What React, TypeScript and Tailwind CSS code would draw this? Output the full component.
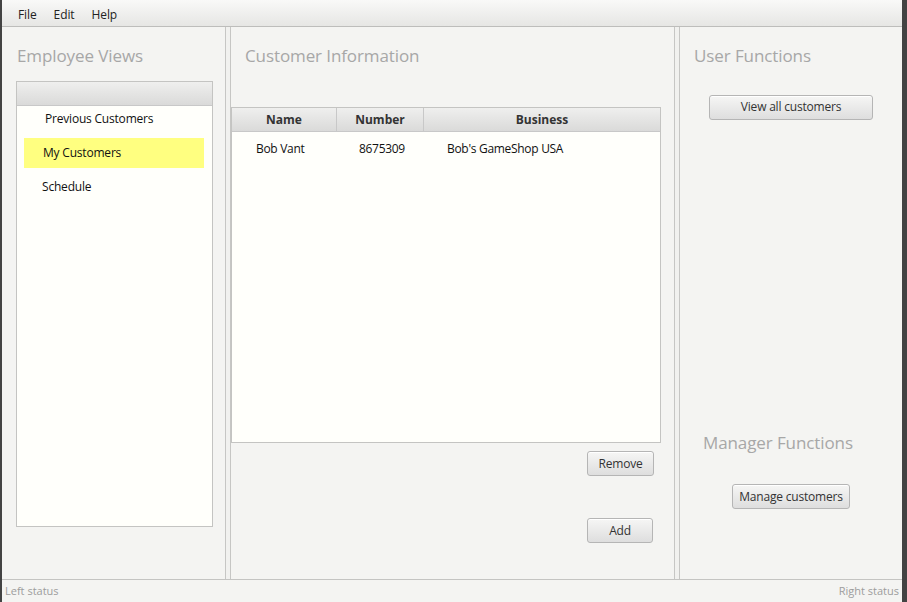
import React from "react"

const font = "font-['Open_Sans','Noto_Sans',sans-serif]"

const Btn = ({ label, w }: { label: string; w: string }) => (
  <button
    className={`${w} h-[25px] rounded-[3px] border border-[#b5b5b5] bg-gradient-to-b from-[#f6f6f5] to-[#dedede] text-[12px] tracking-[-0.2px] text-[#333] shadow-[inset_0_1px_0_#fff] leading-none`}
  >
    {label}
  </button>
)

const Title = ({ text, className = "" }: { text: string; className?: string }) => (
  <div className={`text-[17px] leading-none tracking-[-0.1px] text-[#a7a7a7] ${className}`}>{text}</div>
)

const Divider = () => (
  <div className="w-[6px] shrink-0 border-x border-[#c6c6c4] bg-[#f1f1ef]" />
)

export default function App() {
  return (
    <div className={`${font} flex h-[602px] w-[907px] bg-[#434343] pl-[2px] pr-[5px]`}>
      <div className="flex flex-1 flex-col bg-[#f4f4f2]">
        {/* menu */}
        <div className="flex h-[27px] items-center gap-[17px] border-b border-[#bdbdbb] bg-gradient-to-b from-[#f9f9f8] to-[#e6e6e4] pl-[16px] pt-[4px] text-[12px] tracking-[-0.1px] text-[#222]">
          <span>File</span>
          <span>Edit</span>
          <span>Help</span>
        </div>

        <div className="flex flex-1">
          {/* left */}
          <div className="flex w-[223px] shrink-0 flex-col pt-[20px]">
            <Title text="Employee Views" className="pl-[15px]" />
            <div className="ml-[14px] mt-[17px] flex h-[446px] w-[197px] flex-col border border-[#c4c4c2] bg-[#fffffb]">
              <div className="h-[24px] border-b border-[#c8c8c8] bg-gradient-to-b from-[#efefee] to-[#dadad9]" />
              <div className="relative text-[12px] tracking-[-0.2px] text-[#111]">
                <div className="pl-[28px] pt-[4px] leading-[18px]">Previous Customers</div>
                <div className="ml-[7px] mt-[10px] flex h-[30px] w-[180px] items-center bg-[#ffff80] pl-[19px]">
                  My Customers
                </div>
                <div className="pl-[25px] pt-[10px] leading-[18px]">Schedule</div>
              </div>
            </div>
          </div>

          <Divider />

          {/* middle */}
          <div className="flex w-[443px] shrink-0 flex-col pt-[20px]">
            <Title text="Customer Information" className="pl-[14px]" />
            <div className="mt-[43px] flex h-[336px] w-[430px] flex-col border border-[#c4c4c2] bg-[#fffffb]">
              <div className="flex h-[24px] border-b border-[#c8c8c8] bg-gradient-to-b from-[#efefee] to-[#dadad9] text-[12px] font-bold text-[#333]">
                <div className="flex w-[105px] items-center justify-center border-r border-[#c8c8c8]">Name</div>
                <div className="flex w-[87px] items-center justify-center border-r border-[#c8c8c8]">Number</div>
                <div className="flex flex-1 items-center justify-center">Business</div>
              </div>
              <div className="flex h-[34px] items-center text-[12px] tracking-[-0.3px] text-[#111]">
                <div className="w-[105px] pl-[24px]">Bob Vant</div>
                <div className="w-[87px] pl-[22px]">8675309</div>
                <div className="flex-1 pl-[23px]">Bob's GameShop USA</div>
              </div>
            </div>
            <div className="mt-[8px] flex w-[423px] justify-end">
              <Btn label="Remove" w="w-[67px]" />
            </div>
            <div className="mt-[42px] flex w-[422px] justify-end">
              <Btn label="Add" w="w-[66px]" />
            </div>
          </div>

          <Divider />

          {/* right */}
          <div className="flex w-[222px] shrink-0 flex-col pt-[20px]">
            <Title text="User Functions" className="pl-[14px]" />
            <div className="mt-[29px] pl-[29px]">
              <Btn label="View all customers" w="w-[164px]" />
            </div>
            <Title text="Manager Functions" className="mt-[314px] pl-[23px]" />
            <div className="mt-[32px] pl-[52px]">
              <Btn label="Manage customers" w="w-[118px]" />
            </div>
          </div>
        </div>

        {/* status */}
        <div className="flex h-[23px] items-center justify-between border-t border-[#c4c4c2] px-[3px] text-[11px] text-[#9d9d9d]">
          <span>Left status</span>
          <span>Right status</span>
        </div>
      </div>
    </div>
  )
}
